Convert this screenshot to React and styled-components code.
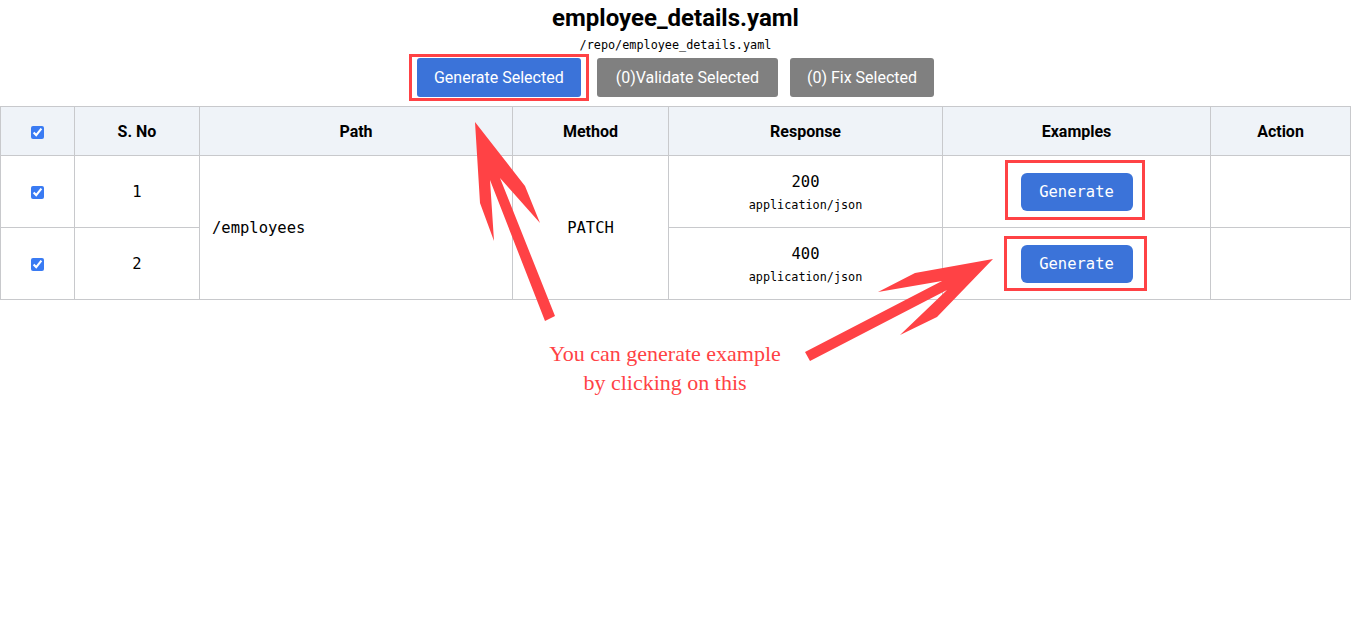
import styled, { createGlobalStyle } from 'styled-components';

const GlobalStyle = createGlobalStyle`
    body {
        margin: 0;
        background: #fff;
        font-family: Roboto, "Liberation Sans", sans-serif;
        color: #000;
    }
`;

const RED = '#ff4245';
const MONO = '"DejaVu Sans Mono", "Liberation Mono", monospace';

const rows = [
    { no: 1, code: '200', type: 'application/json', box: '-13px -12px -9px -16px' },
    { no: 2, code: '400', type: 'application/json', box: '-9px -14px -8px -17px' },
];

const App = () => (
    <Page>
        <GlobalStyle />
        <Header>
            <Title>employee_details.yaml</Title>
            <FilePath>/repo/employee_details.yaml</FilePath>
            <Toolbar>
                <Marked>
                    <ToolButton primary>Generate Selected</ToolButton>
                    <Highlight inset="-4px -8px -4px -8px" />
                </Marked>
                <ToolButton wide>(0)Validate Selected</ToolButton>
                <ToolButton>(0) Fix Selected</ToolButton>
            </Toolbar>
        </Header>

        <Table>
            <colgroup>
                <col style={{ width: 74 }} />
                <col style={{ width: 125 }} />
                <col style={{ width: 313 }} />
                <col style={{ width: 156 }} />
                <col style={{ width: 274 }} />
                <col style={{ width: 268 }} />
                <col style={{ width: 140 }} />
            </colgroup>
            <thead>
                <tr>
                    <Th><Check type="checkbox" defaultChecked /></Th>
                    <Th>S. No</Th>
                    <Th>Path</Th>
                    <Th>Method</Th>
                    <Th>Response</Th>
                    <Th>Examples</Th>
                    <Th>Action</Th>
                </tr>
            </thead>
            <tbody>
                {rows.map((row, i) => (
                    <tr key={row.no}>
                        <Td><Check type="checkbox" defaultChecked /></Td>
                        <Td>{row.no}</Td>
                        {i === 0 && <Td rowSpan={2} left>/employees</Td>}
                        {i === 0 && <Td rowSpan={2}>PATCH</Td>}
                        <Td>
                            <Response>
                                <Code>{row.code}</Code>
                                <MediaType>{row.type}</MediaType>
                            </Response>
                        </Td>
                        <Td>
                            <Marked>
                                <GenerateButton>Generate</GenerateButton>
                                <Highlight inset={row.box} />
                            </Marked>
                        </Td>
                        <Td />
                    </tr>
                ))}
            </tbody>
        </Table>

        <Arrows width="1366" height="633" viewBox="0 0 1366 633">
            <polygon
                fill={RED}
                points="475,122 525,186 540,223 500,178 555,316 545,321 490,180 494,241 480,203"
            />
            <polygon
                fill={RED}
                points="993,259 915,273 878,292 942,281 805,352 810,361 947,290 900,335 937,317"
            />
        </Arrows>
        <Caption>
            You can generate example
            <br />
            by clicking on this
        </Caption>
    </Page>
);

export default App;

const Page = styled.div`
    position: relative;
    width: 1351px;
    height: 633px;
`;

const Header = styled.header`
    display: flex;
    flex-direction: column;
    align-items: center;
    padding-top: 4px;
`;

const Title = styled.h1`
    margin: 0;
    font-size: 24px;
    line-height: 28px;
    font-weight: 700;
`;

const FilePath = styled.div`
    margin-top: 6px;
    font-family: ${MONO};
    font-size: 11.8px;
    line-height: 14px;
`;

const Toolbar = styled.div`
    display: flex;
    align-items: center;
    gap: 12px;
    margin-top: 6px;
    & > :first-child {
        margin-right: 4px;
    }
`;

const Marked = styled.span`
    position: relative;
    display: inline-flex;
`;

const Highlight = styled.span`
    position: absolute;
    inset: ${(p) => p.inset};
    border: 3px solid ${RED};
    pointer-events: none;
`;

const ToolButton = styled.button`
    height: 39px;
    padding: 0 ${(p) => (p.wide ? '19px' : '17px')};
    border: none;
    border-radius: 3px;
    background: ${(p) => (p.primary ? '#3b73d9' : '#808080')};
    color: #fff;
    font-family: Roboto, sans-serif;
    font-size: 16px;
`;

const Table = styled.table`
    margin-top: 9px;
    width: 1351px;
    table-layout: fixed;
    border-collapse: collapse;
    font-family: ${MONO};
    font-size: 15.5px;
`;

const Th = styled.th`
    height: 48px;
    padding: 0;
    background: #eff3f8;
    border: 1px solid #c8c9cc;
    font-family: Roboto, sans-serif;
    font-size: 16px;
    font-weight: 700;
    text-align: center;
`;

const Td = styled.td`
    height: 71px;
    padding: 0 12px;
    border: 1px solid #c8c9cc;
    text-align: ${(p) => (p.left ? 'left' : 'center')};
    vertical-align: middle;
`;

const Check = styled.input`
    width: 13px;
    height: 13px;
    margin: 0;
    vertical-align: middle;
    accent-color: #3a7bf3;
`;

const Response = styled.div`
    display: flex;
    flex-direction: column;
    align-items: center;
    gap: 6px;
    padding-top: 1px;
`;

const Code = styled.span`
    font-size: 15.5px;
    line-height: 20px;
`;

const MediaType = styled.span`
    font-size: 11.8px;
    line-height: 14px;
`;

const GenerateButton = styled.button`
    width: 112px;
    height: 38px;
    border: none;
    border-radius: 6px;
    background: #3b73d9;
    color: #fff;
    font-family: ${MONO};
    font-size: 15.5px;
`;

const Arrows = styled.svg`
    position: absolute;
    top: 0;
    left: 0;
    pointer-events: none;
`;

const Caption = styled.div`
    position: absolute;
    top: 339px;
    left: 465px;
    width: 400px;
    text-align: center;
    font-family: "Liberation Serif", serif;
    font-size: 22px;
    line-height: 29px;
    color: ${RED};
`;
